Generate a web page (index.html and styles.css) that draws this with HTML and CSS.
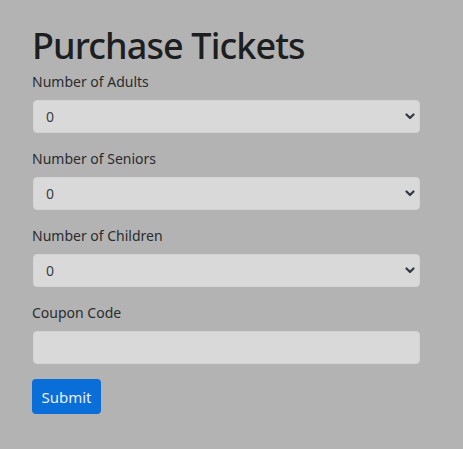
FILE: index.html
```html
<!DOCTYPE html>
<html>
<head>
<meta charset="utf-8">
<link rel="stylesheet" href="styles.css">
</head>
<body>
<main class="page">
  <h1 class="title">Purchase Tickets</h1>
  <form class="form">
    <div class="field">
      <label class="label" for="adults">Number of Adults</label>
      <div class="select-wrap">
        <select class="select" id="adults"><option>0</option><option>1</option><option>2</option></select>
        <svg class="chev" viewBox="0 0 10 7" width="10" height="7"><path d="M1.5 1.5l3.5 3.5 3.5-3.5" fill="none" stroke="#343a40" stroke-width="2.2" stroke-linecap="round" stroke-linejoin="round"/></svg>
      </div>
    </div>
    <div class="field">
      <label class="label" for="seniors">Number of Seniors</label>
      <div class="select-wrap">
        <select class="select" id="seniors"><option>0</option><option>1</option><option>2</option></select>
        <svg class="chev" viewBox="0 0 10 7" width="10" height="7"><path d="M1.5 1.5l3.5 3.5 3.5-3.5" fill="none" stroke="#343a40" stroke-width="2.2" stroke-linecap="round" stroke-linejoin="round"/></svg>
      </div>
    </div>
    <div class="field">
      <label class="label" for="children">Number of Children</label>
      <div class="select-wrap">
        <select class="select" id="children"><option>0</option><option>1</option><option>2</option></select>
        <svg class="chev" viewBox="0 0 10 7" width="10" height="7"><path d="M1.5 1.5l3.5 3.5 3.5-3.5" fill="none" stroke="#343a40" stroke-width="2.2" stroke-linecap="round" stroke-linejoin="round"/></svg>
      </div>
    </div>
    <div class="field">
      <label class="label" for="coupon">Coupon Code</label>
      <input class="input" id="coupon" type="text">
    </div>
    <button class="btn" type="button">Submit</button>
  </form>
</main>
</body>
</html>
```

FILE: styles.css
```css
html, body {
  margin: 0;
  padding: 0;
  background: #b3b3b3;
  font-family: "Noto Sans", "Open Sans", sans-serif;
  color: #1f2123;
}
.page {
  width: 388px;
  padding: 22px 0 0 32px;
}
.title {
  margin: 0 0 1px;
  font-size: 36px;
  font-weight: 500;
  letter-spacing: -0.9px;
  line-height: 48px;
  color: #1c1e20;
}
.form {
  display: flex;
  flex-direction: column;
}
.field {
  display: flex;
  flex-direction: column;
  margin-bottom: 15px;
}
.label {
  font-size: 14px;
  line-height: 22px;
  margin-bottom: 7px;
  color: #2a2c2e;
}
.select-wrap {
  position: relative;
  margin-left: 1px;
  width: 387px;
}
.select, .input {
  box-sizing: border-box;
  width: 387px;
  height: 33px;
  margin: 0;
  border: 1px solid #d3d3d3;
  border-radius: 4px;
  background: #d9d9d9;
  font-family: inherit;
  font-size: 14px;
  color: #3a3c3e;
  padding: 0 12px;
  appearance: none;
  -webkit-appearance: none;
  outline: none;
}
.input {
  margin-left: 1px;
}
.chev {
  position: absolute;
  right: 5px;
  top: 13px;
}
.btn {
  align-self: flex-start;
  width: 69px;
  height: 35px;
  margin-top: 0;
  border: 0;
  border-radius: 4px;
  background: #0a6ed9;
  color: #e8eef6;
  font-family: inherit;
  font-size: 15px;
  padding: 0;
}
```
